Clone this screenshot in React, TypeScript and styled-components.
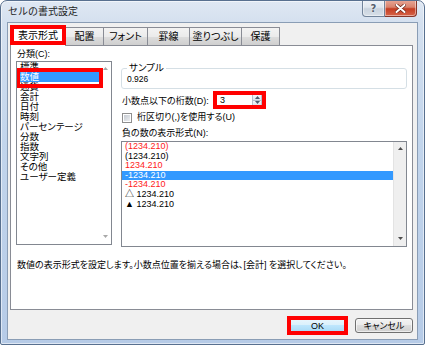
import React from "react";
import styled, { createGlobalStyle, css } from "styled-components";

const RED = "#ff0000";

const GlobalStyle = createGlobalStyle`
  html, body {
    margin: 0;
    padding: 0;
    background: #ffffff;
  }
  * {
    box-sizing: border-box;
  }
  body {
    font-family: "Liberation Sans", "Noto Sans CJK JP", sans-serif;
    font-size: 9px;
    color: #000;
    font-feature-settings: "palt";
  }
`;

// annotation frame drawn over a control (negative = outside)
const redBox = (t: number, r: number, b: number, l: number) => css`
  position: relative;
  &::after {
    content: "";
    position: absolute;
    top: ${t}px;
    right: ${r}px;
    bottom: ${b}px;
    left: ${l}px;
    border: 4px solid ${RED};
    pointer-events: none;
    z-index: 5;
  }
`;

const Window = styled.div`
  width: 425px;
  height: 345px;
  display: flex;
  flex-direction: column;
  padding: 0 6px 4px;
  border: 1px solid #58708f;
  border-radius: 7px 7px 2px 2px;
  background: linear-gradient(
    180deg,
    #dfe8f3 0px,
    #d4e0ef 22px,
    #c2d5ec 140px,
    #b6cbe7 345px
  );
  box-shadow: inset 0 0 0 1px rgba(255, 255, 255, 0.55);
  overflow: hidden;
`;

const TitleBar = styled.div`
  height: 21px;
  display: flex;
  align-items: flex-start;
`;

const Title = styled.div`
  padding: 5px 0 0 1px;
  font-size: 10px;
  line-height: 12px;
  color: #1e1e1e;
  font-feature-settings: normal;
`;

const Captions = styled.div`
  margin: -1px 1px 0 auto;
  display: flex;
`;

const CaptionButton = styled.div<{ $close?: boolean }>`
  width: ${(p) => (p.$close ? 32 : 23)}px;
  height: 17px;
  display: flex;
  align-items: center;
  justify-content: center;
  border: 1px solid ${(p) => (p.$close ? "#86362a" : "#71839a")};
  border-top: none;
  border-left: ${(p) => (p.$close ? "none" : "1px solid #71839a")};
  border-radius: ${(p) => (p.$close ? "0 0 4px 0" : "0 0 0 4px")};
  background: ${(p) =>
    p.$close
      ? "linear-gradient(180deg, #e8a898 0%, #d9826c 45%, #c43d22 55%, #d6654a 100%)"
      : "linear-gradient(180deg, #eef2f7 0%, #dfe6ee 45%, #c9d3de 55%, #d7dfe8 100%)"};
  box-shadow: inset 0 0 0 1px rgba(255, 255, 255, 0.45);
  color: #555f6d;
  font-family: "DejaVu Sans", sans-serif;
  font-size: 10px;
  font-weight: bold;
  text-shadow: 0 0 2px #fff;
`;

const Client = styled.div`
  flex: 1;
  display: flex;
  flex-direction: column;
  background: #f0f0f0;
  border: 1px solid #8a9db5;
  padding: 2px 4px 0 2px;
`;

const TabStrip = styled.div`
  height: 20px;
  display: flex;
  align-items: flex-end;
  position: relative;
  z-index: 1;
`;

const Tab = styled.div<{ $w: number; $active?: boolean }>`
  width: ${(p) => p.$w}px;
  height: ${(p) => (p.$active ? 21 : 18)}px;
  margin-bottom: ${(p) => (p.$active ? -1 : 0)}px;
  & + & {
    margin-left: -1px;
  }
  display: flex;
  align-items: center;
  justify-content: center;
  border: 1px solid #898c95;
  border-bottom: none;
  background: ${(p) =>
    p.$active ? "#ffffff" : "linear-gradient(180deg, #f3f3f3 0%, #ebebeb 50%, #dddddd 51%, #cfcfcf 100%)"};
  font-size: 10px;
  line-height: 12px;
  padding-top: ${(p) => (p.$active ? 0 : 1)}px;
  ${(p) => p.$active && redBox(-1, -1, 1, -1)}
`;

const Panel = styled.div`
  height: 265px;
  background: #fff;
  border: 1px solid #898c95;
  padding: 2px 5px 0;
  display: grid;
  grid-template-columns: 96px 286px;
  grid-template-rows: auto auto;
  column-gap: 9px;
  align-content: start;
`;

const Column = styled.div<{ $top?: number }>`
  display: flex;
  flex-direction: column;
  padding-top: ${(p) => p.$top ?? 0}px;
`;

const Label = styled.div<{ $lh?: number }>`
  font-size: 9px;
  line-height: ${(p) => p.$lh ?? 13}px;
  padding-left: 1px;
  white-space: nowrap;
`;

const ListBox = styled.div<{ $h: number; $top?: number }>`
  height: ${(p) => p.$h}px;
  margin-top: ${(p) => p.$top ?? 0}px;
  display: flex;
  background: #fff;
  border: 1px solid #828790;
  overflow: hidden;
`;

const ListItems = styled.div`
  flex: 1;
  min-width: 0;
  display: flex;
  flex-direction: column;
`;

const CategoryItem = styled.div<{ $selected?: boolean }>`
  height: 10px;
  line-height: 10px;
  font-size: 9.5px;
  padding-left: 3px;
  white-space: nowrap;
  background: ${(p) => (p.$selected ? "#3399ff" : "transparent")};
  color: ${(p) => (p.$selected ? "#fff" : "#000")};
  ${(p) => p.$selected && redBox(-4, -4, -6, -1)}
`;

const NumberItem = styled.div<{ $selected?: boolean; $red?: boolean }>`
  height: 9.6px;
  line-height: 9.6px;
  font-size: 9px;
  padding-left: 3px;
  white-space: nowrap;
  background: ${(p) => (p.$selected ? "#3399ff" : "transparent")};
  color: ${(p) => (p.$selected ? "#fff" : p.$red ? "#ff1a1a" : "#000")};
`;

const ScrollBar = styled.div<{ $w: number; $track: string }>`
  width: ${(p) => p.$w}px;
  display: flex;
  flex-direction: column;
  justify-content: space-between;
  align-items: center;
  padding: 5px 0 6px;
  background: ${(p) => p.$track};
  border-left: 1px solid ${(p) => (p.$track === "#fff" ? "#fff" : "#e3e3e3")};
`;

const Group = styled.fieldset`
  margin: 0;
  padding: 0 4px 3px;
  border: 1px solid #d5dfe5;
  border-radius: 3px;
  & > legend {
    padding: 0 2px;
    margin-left: 1px;
    font-size: 9.5px;
    line-height: 10px;
  }
`;

const SampleValue = styled.div`
  line-height: 12px;
  font-size: 8.5px;
  padding-left: 1px;
`;

const Row = styled.div<{ $top: number; $h: number }>`
  margin-top: ${(p) => p.$top}px;
  height: ${(p) => p.$h}px;
  display: flex;
  align-items: center;
`;

const DecimalLabel = styled.div`
  width: 94px;
  font-size: 9px;
  white-space: nowrap;
  padding-left: 1px;
`;

const Spinner = styled.div`
  width: 49px;
  height: 14px;
  display: flex;
  background: #fff;
  border: 1px solid #abadb3;
  border-top-color: #9aa0a8;
  ${redBox(-3, -3, -3, -3)}
`;

const SpinValue = styled.div`
  flex: 1;
  padding-left: 4px;
  font-size: 9px;
  line-height: 12px;
`;

const SpinButtons = styled.div`
  width: 10px;
  display: flex;
  flex-direction: column;
  margin: 0 1px 0 0;
`;

const SpinButton = styled.div`
  flex: 1;
  display: flex;
  align-items: center;
  justify-content: center;
  background: linear-gradient(180deg, #f4f7fa 0%, #dde4ec 100%);
  border: 1px solid #b5bfcb;
  & + & {
    border-top: none;
  }
`;

const CheckBox = styled.div`
  width: 10px;
  height: 10px;
  margin-left: 1px;
  margin-right: 4px;
  border: 1px solid #8f8f8f;
  background: #fff;
  padding: 1px;
  &::before {
    content: "";
    display: block;
    width: 100%;
    height: 100%;
    background: linear-gradient(135deg, #c6cbd2 0%, #eceef1 100%);
  }
`;

const Description = styled.div`
  grid-column: 1 / -1;
  margin-top: 12px;
  line-height: 12px;
  font-size: 9px;
  padding-left: 1px;
  white-space: nowrap;
`;

const ButtonRow = styled.div`
  display: flex;
  justify-content: flex-end;
  gap: 9px;
  padding-top: 8px;
`;

const Button = styled.div<{ $w: number; $default?: boolean }>`
  width: ${(p) => p.$w}px;
  height: 15px;
  display: flex;
  align-items: center;
  justify-content: center;
  font-size: 9px;
  border-radius: 3px;
  border: 1px solid ${(p) => (p.$default ? "#3c7fb1" : "#707070")};
  background: ${(p) =>
    p.$default
      ? "linear-gradient(180deg, #eaf6fd 0%, #d9f0fc 49%, #bee6fd 50%, #a7d9f5 100%)"
      : "linear-gradient(180deg, #f2f2f2 0%, #ebebeb 49%, #dddddd 50%, #cfcfcf 100%)"};
  box-shadow: inset 0 0 0 1px rgba(255, 255, 255, 0.6);
  ${(p) => p.$default && redBox(-3, -3, -3, -3)}
`;

const Arrow = ({ dir, color = "#4d4d4d" }: { dir: "up" | "down"; color?: string }) => (
  <svg width="5" height="3" viewBox="0 0 5 3">
    <path d={dir === "up" ? "M0 3 L2.5 0 L5 3 Z" : "M0 0 L2.5 3 L5 0 Z"} fill={color} />
  </svg>
);

const CloseGlyph = () => (
  <svg width="11" height="9" viewBox="0 0 11 9">
    <path d="M1.5 1 L9.5 8 M9.5 1 L1.5 8" stroke="#6a2419" strokeWidth="3.4" strokeLinecap="round" />
    <path d="M1.5 1 L9.5 8 M9.5 1 L1.5 8" stroke="#ffffff" strokeWidth="2" strokeLinecap="round" />
  </svg>
);

const tabs = [
  { label: "表示形式", w: 56 },
  { label: "配置", w: 39 },
  { label: "フォント", w: 45 },
  { label: "罫線", w: 43 },
  { label: "塗りつぶし", w: 53 },
  { label: "保護", w: 39 },
];

const categories = [
  "標準",
  "数値",
  "通貨",
  "会計",
  "日付",
  "時刻",
  "パーセンテージ",
  "分数",
  "指数",
  "文字列",
  "その他",
  "ユーザー定義",
];

const negatives = [
  { text: "(1234.210)", red: true },
  { text: "(1234.210)" },
  { text: "1234.210", red: true },
  { text: "-1234.210", selected: true },
  { text: "-1234.210", red: true },
  { text: "△ 1234.210" },
  { text: "▲ 1234.210" },
];

export default function App() {
  return (
    <>
      <GlobalStyle />
      <Window>
        <TitleBar>
          <Title>セルの書式設定</Title>
          <Captions>
            <CaptionButton>?</CaptionButton>
            <CaptionButton $close>
              <CloseGlyph />
            </CaptionButton>
          </Captions>
        </TitleBar>
        <Client>
          <TabStrip>
            {tabs.map((t, i) => (
              <Tab key={t.label} $w={t.w} $active={i === 0}>
                {t.label}
              </Tab>
            ))}
          </TabStrip>
          <Panel>
            <Column>
              <Label>分類(C):</Label>
              <ListBox $h={184}>
                <ListItems>
                  {categories.map((c) => (
                    <CategoryItem key={c} $selected={c === "数値"}>
                      {c}
                    </CategoryItem>
                  ))}
                </ListItems>
                <ScrollBar $w={12} $track="#fff">
                  <Arrow dir="up" color="#a8a8a8" />
                  <Arrow dir="down" color="#a8a8a8" />
                </ScrollBar>
              </ListBox>
            </Column>
            <Column $top={15}>
              <Group>
                <legend>サンプル</legend>
                <SampleValue>0.926</SampleValue>
              </Group>
              <Row $top={4} $h={14}>
                <DecimalLabel>小数点以下の桁数(D):</DecimalLabel>
                <Spinner>
                  <SpinValue>3</SpinValue>
                  <SpinButtons>
                    <SpinButton>
                      <Arrow dir="up" color="#4b5a6e" />
                    </SpinButton>
                    <SpinButton>
                      <Arrow dir="down" color="#4b5a6e" />
                    </SpinButton>
                  </SpinButtons>
                </Spinner>
              </Row>
              <Row $top={5} $h={11}>
                <CheckBox />
                <Label $lh={11}>桁区切り(,)を使用する(U)</Label>
              </Row>
              <Row $top={4} $h={12}>
                <Label $lh={12}>負の数の表示形式(N):</Label>
              </Row>
              <ListBox $h={106} $top={2}>
                <ListItems>
                  {negatives.map((n, i) => (
                    <NumberItem key={i} $red={n.red} $selected={n.selected}>
                      {n.text}
                    </NumberItem>
                  ))}
                </ListItems>
                <ScrollBar $w={13} $track="#efefef">
                  <Arrow dir="up" />
                  <Arrow dir="down" />
                </ScrollBar>
              </ListBox>
            </Column>
            <Description>
              数値の表示形式を設定します。小数点位置を揃える場合は、[会計] を選択してください。
            </Description>
          </Panel>
          <ButtonRow>
            <Button $w={57} $default>
              OK
            </Button>
            <Button $w={58}>キャンセル</Button>
          </ButtonRow>
        </Client>
      </Window>
    </>
  );
}
